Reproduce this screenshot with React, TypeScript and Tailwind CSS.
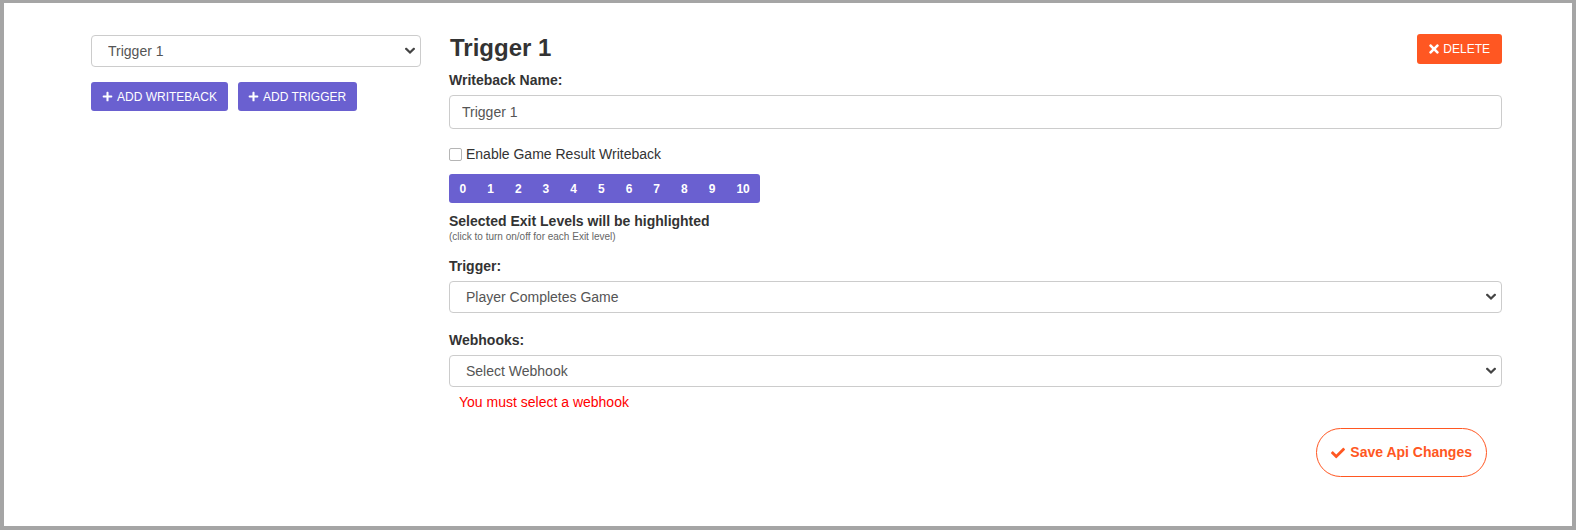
import React from "react";
import { FaPlus, FaTimes, FaCheck } from "react-icons/fa";

const font = { fontFamily: '"Liberation Sans", Arial, sans-serif' };

function Chevron() {
  return (
    <svg width="10" height="7" viewBox="0 0 10 7" className="pointer-events-none absolute right-[6px] top-1/2 -translate-y-1/2">
      <path d="M1.2 1.3 L5 5 L8.8 1.3" fill="none" stroke="#444" strokeWidth="2.2" strokeLinecap="square" />
    </svg>
  );
}

function SelectBox({ value, className = "" }: { value: string; className?: string }) {
  return (
    <div className={`relative ${className}`}>
      <select
        defaultValue={value}
        className="h-[32px] w-full appearance-none rounded-[4px] border border-[#ccc] bg-white pl-[16px] pr-[24px] text-[14px] text-[#555] outline-none"
        style={font}
      >
        <option>{value}</option>
      </select>
      <Chevron />
    </div>
  );
}

function Label({ children, className = "" }: { children: React.ReactNode; className?: string }) {
  return <div className={`text-[14px] font-bold leading-[20px] text-[#333] ${className}`}>{children}</div>;
}

const levels = ["0", "1", "2", "3", "4", "5", "6", "7", "8", "9", "10"];

export default function App() {
  return (
    <div
      className="box-border flex h-[530px] w-full border-x-4 border-t-[3px] border-b-4 border-[#a5a5a5] bg-white pl-[87px] pt-[31px]"
      style={font}
    >
      {/* writeback list */}
      <div className="mt-px w-[330px] shrink-0">
        <SelectBox value="Trigger 1" />
        <div className="mt-[15px] flex gap-[10px]">
          <button className="flex h-[29px] items-center gap-[4px] rounded-[3px] bg-[#6a60d0] pl-[11px] pr-[11px] text-[12px] text-white">
            <FaPlus className="h-[11px] w-[11px]" />
            ADD WRITEBACK
          </button>
          <button className="flex h-[29px] items-center gap-[4px] rounded-[3px] bg-[#6a60d0] pl-[10px] pr-[11px] text-[12px] text-white">
            <FaPlus className="h-[11px] w-[11px]" />
            ADD TRIGGER
          </button>
        </div>
      </div>

      {/* editor */}
      <div className="ml-[28px] flex w-[1053px] shrink-0 flex-col">
        <div className="flex items-start justify-between">
          <h3 className="pl-px text-[24px] font-bold leading-[28px] text-[#333]">Trigger 1</h3>
          <button className="flex h-[30px] items-center gap-[4px] rounded-[3px] bg-[#ff5722] px-[12px] text-[12px] text-white">
            <FaTimes className="h-[14px] w-[10px]" />
            DELETE
          </button>
        </div>

        <Label className="mt-[6px]">Writeback Name:</Label>
        <input
          defaultValue="Trigger 1"
          className="mt-[5px] box-border h-[34px] w-full rounded-[4px] border border-[#ccc] px-[12px] text-[14px] text-[#555] outline-none"
          style={font}
        />

        <label className="mt-[15px] flex h-[20px] items-center gap-[4px] text-[14px] text-[#333]">
          <span className="box-border h-[13px] w-[13px] rounded-[2px] border border-[#b5b5b5] bg-white" />
          Enable Game Result Writeback
        </label>

        <div className="mt-[10px] flex h-[29px] w-fit items-center rounded-[3px] bg-[#6a60d0]">
          {levels.map((l) => (
            <span key={l} className="px-[10.5px] text-[12px] font-bold text-white">
              {l}
            </span>
          ))}
        </div>

        <Label className="mt-[8px]">Selected Exit Levels will be highlighted</Label>
        <div className="text-[10px] leading-[12px] text-[#666]">(click to turn on/off for each Exit level)</div>

        <Label className="mt-[13px]">Trigger:</Label>
        <SelectBox value="Player Completes Game" className="mt-[5px]" />

        <Label className="mt-[17px]">Webhooks:</Label>
        <SelectBox value="Select Webhook" className="mt-[5px]" />
        <div className="mt-[5px] pl-[10px] text-[14px] leading-[20px] text-[#ff0000]">You must select a webhook</div>

        <button className="mr-[15px] mt-[16px] flex h-[49px] items-center gap-[5px] self-end rounded-full border border-[#ff5722] px-[14px] text-[14px] font-bold text-[#ff5722]">
          <FaCheck className="h-[14px] w-[14px]" />
          Save Api Changes
        </button>
      </div>
    </div>
  );
}
